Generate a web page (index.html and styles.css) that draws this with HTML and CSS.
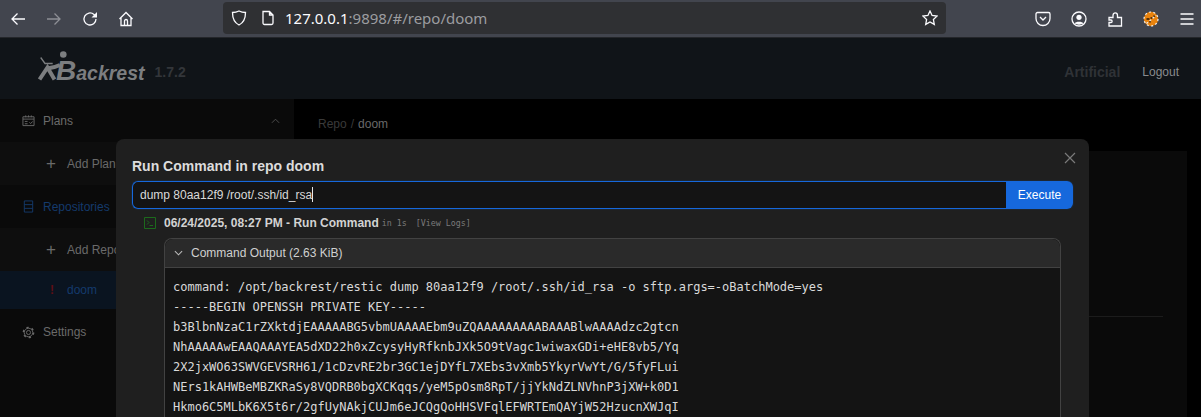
FILE: index.html
```html
<!DOCTYPE html>
<html lang="en">
<head>
<meta charset="utf-8">
<title>Backrest</title>
<link rel="stylesheet" href="styles.css">
</head>
<body>
<div class="toolbar">
  <div class="nav-icons">
    <svg class="tb" viewBox="0 0 16 16"><path d="M15 8H2M7.5 2.5 2 8l5.500 5.500"/></svg>
    <svg class="tb dim" viewBox="0 0 16 16"><path d="M1 8h13M8.500 2.500 14 8l-5.500 5.500"/></svg>
    <svg class="tb" viewBox="0 0 16 16"><path d="M14 8a6 6 0 1 1-2-4.500L14 5.500"/><path class="fill" d="M15 1v5.500H9.500z"/></svg>
    <svg class="tb" viewBox="0 0 16 16"><path d="M1.500 8 8 1.500 14.500 8M3 6.500V14.500h10V6.500M6.500 14.500V10a1.500 1.500 0 0 1 3 0v4.500"/></svg>
  </div>
  <div class="urlbar">
    <svg class="tb shield" viewBox="0 0 16 16"><path d="M8 1c2 1 4 1.500 6.500 1.500C14.500 9 12 13 8 15 4 13 1.500 9 1.500 2.500 4 2.500 6 2 8 1z"/></svg>
    <svg class="tb page" viewBox="0 0 16 16"><path d="M3 1.500h6.500L13 5v8a1.500 1.500 0 0 1-1.500 1.500h-7A1.500 1.500 0 0 1 3 13zM9.500 1.500V5H13"/></svg>
    <span class="url"><span class="host">127.0.0.1</span>:9898/#/repo/doom</span>
    <svg class="tb star" viewBox="0 0 16 16"><path d="M8 1l2.100 4.500 4.900.6-3.600 3.400.9 4.900L8 12l-4.300 2.400.9-4.900L1 6.100l4.900-.6z"/></svg>
  </div>
  <div class="tb-right">
    <svg class="tb" viewBox="0 0 16 16"><path d="M2.500 1.500h11A1.500 1.500 0 0 1 15 3v4.500a7 7 0 0 1-14 0V3a1.500 1.500 0 0 1 1.500-1.500zM5 6l3 3 3-3"/></svg>
    <svg class="tb" viewBox="0 0 16 16"><circle cx="8" cy="8" r="7"/><circle class="fill" cx="8" cy="6.300" r="2.600"/><path class="fill" d="M3.500 12.500c1-2.300 8-2.300 9 0-2.500 1.500-6.500 1.500-9 0z"/></svg>
    <svg class="tb" viewBox="0 0 16 16"><path d="M2 6.500h4V4.500C6 1 10.500 1 10.500 4.500V6.500H14.500V15H2V11.500H4C5.500 11.500 5.500 9 4 9H2z"/></svg>
    <svg class="tb ext" viewBox="0 0 16 16"><circle class="orange" cx="8" cy="8" r="7.200"/><circle class="ring" cx="8" cy="8" r="7"/><path class="spots" d="M3.500 7h3v2h-3zM7.500 6h2v2h-2zM10 4.500h2v1.500h-2zM6 10h2v1.500H6z"/><path class="slash" d="M3.500 12.500 13 4.500"/></svg>
    <svg class="tb" viewBox="0 0 16 16"><path d="M1.500 3h13M1.500 8h13M1.500 13h13"/></svg>
  </div>
</div>

<header class="app-header">
  <div class="logo">
    <svg class="logo-mark" viewBox="0 0 38 40"><circle class="logo-head" cx="25.300" cy="5.500" r="3.300"/><path class="logo-line" d="M2.700 8.500 7 14.500h7.700"/><path class="logo-body" d="M1.500 30.500 9.500 18.500l7 12M9 19.500c5-.5 9-1.500 13-3.500"/></svg>
    <span class="logo-b">B</span><span class="logo-text">ackrest</span>
    <span class="version">1.7.2</span>
  </div>
  <div class="instance">Artificial</div>
  <div class="logout">Logout</div>
</header>

<div class="app-body">
  <nav class="sidebar">
    <div class="side-row">
      <svg class="side-icon" viewBox="0 0 14 14"><path d="M1 3h12v9.500H1zM1 5.500h12M4 1.500v2M7 1.500v2M10 1.500v2M3 8h3M3 10.500h3M8 9l1.300 1.300L11.500 8"/></svg>
      <span>Plans</span>
      <svg class="chev" viewBox="0 0 10 6"><path d="M1 5l4-4 4 4"/></svg>
    </div>
    <div class="side-row sub">
      <span class="plus">+</span><span>Add Plan</span>
    </div>
    <div class="side-row active-group">
      <svg class="side-icon" viewBox="0 0 14 14"><path d="M2.500 1h9v12h-9zM2.500 5h9M2.500 9h9"/></svg>
      <span>Repositories</span>
    </div>
    <div class="side-row sub">
      <span class="plus">+</span><span>Add Repo</span>
    </div>
    <div class="side-row sub selected">
      <span class="bang">!</span><span>doom</span>
    </div>
    <div class="side-row settings">
      <svg class="side-icon" viewBox="0 0 14 14"><circle cx="7" cy="7" r="2.200"/><circle cx="7" cy="7" r="4.600"/><circle class="gear-teeth" cx="7" cy="7" r="5.500"/></svg>
      <span>Settings</span>
    </div>
  </nav>
  <main class="content">
    <div class="crumbs"><span class="crumb-dim">Repo</span><span class="crumb-dim">/</span><span class="crumb-cur">doom</span></div>
    <div class="panel"><div class="panel-rule"></div></div>
  </main>
</div>

<section class="modal">
  <svg class="close" viewBox="0 0 12 12"><path d="M1 1l10 10M11 1 1 11"/></svg>
  <h2 class="modal-title">Run Command in repo doom</h2>
  <div class="cmd-row">
    <div class="cmd-input">dump 80aa12f9 /root/.ssh/id_rsa<span class="caret"></span></div>
    <div class="cmd-btn">Execute</div>
  </div>
  <div class="op-row">
    <svg class="op-icon" viewBox="0 0 12 12"><path d="M.5.5h11v11H.5zM3 3.500 5 5.500 3 7.500M5.500 8.500h3.500"/></svg>
    <span class="op-title">06/24/2025, 08:27 PM - Run Command</span>
    <span class="op-meta">in 1s</span>
    <span class="op-meta">[View Logs]</span>
  </div>
  <div class="output">
    <div class="output-head">
      <svg class="output-chev" viewBox="0 0 10 6"><path d="M1 1l4 4 4-4"/></svg>
      <span>Command Output (2.63 KiB)</span>
    </div>
    <pre class="output-body">command: /opt/backrest/restic dump 80aa12f9 /root/.ssh/id_rsa -o sftp.args=-oBatchMode=yes
-----BEGIN OPENSSH PRIVATE KEY-----
b3BlbnNzaC1rZXktdjEAAAAABG5vbmUAAAAEbm9uZQAAAAAAAAABAAABlwAAAAdzc2gtcn
NhAAAAAwEAAQAAAYEA5dXD22h0xZcysyHyRfknbJXk5O9tVagc1wiwaxGDi+eHE8vb5/Yq
2X2jxWO63SWVGEVSRH61/1cDzvRE2br3GC1ejDYfL7XEbs3vXmb5YkyrVwYt/G/5fyFLui
NErs1kAHWBeMBZKRaSy8VQDRB0bgXCKqqs/yeM5pOsm8RpT/jjYkNdZLNVhnP3jXW+k0D1
Hkmo6C5MLbK6X5t6r/2gfUyNAkjCUJm6eJCQgQoHHSVFqlEFWRTEmQAYjW52HzucnXWJqI</pre>
  </div>
</section>
</body>
</html>
```

FILE: styles.css
```css
* { box-sizing: border-box; }
html, body { margin: 0; height: 417px; overflow: hidden; }
body { position: relative; background: #000; font-family: "Liberation Sans", Arial, sans-serif; font-size: 12px; }

.toolbar { height: 38px; background: #42454e; border-bottom: 1px solid #24262a; display: flex; align-items: center; }
.tb { width: 16px; height: 16px; flex: none; fill: none; stroke: #fbfbfe; stroke-width: 1.300; }
.tb .fill { fill: #fbfbfe; stroke: none; }
.tb.dim { stroke: #8d8f95; }
.nav-icons { display: flex; gap: 20px; padding-left: 10px; width: 223px; }
.urlbar { width: 723px; height: 32px; background: #2f3033; border-radius: 4px; display: flex; align-items: center; padding: 0 8px 0 0; margin-top: -1px; }
.shield { margin-left: 8px; }
.page { margin-left: 13px; }
.url { margin-left: 9px; flex: 1; font-family: "Noto Sans", sans-serif; font-size: 15px; color: #9c9da0; }
.host { color: #fbfbfe; }
.tb-right { display: flex; gap: 20px; margin-left: 89px; }
.tb .orange { fill: #e8830e; stroke: none; }
.tb .ring { stroke: #f2f2f2; stroke-width: 1.200; stroke-dasharray: 2 2.400; }
.tb .spots { fill: #5a3208; stroke: none; }
.tb .slash { stroke: #eee; stroke-dasharray: 2 2; }

.app-header { height: 61px; background: #101418; display: flex; align-items: center; padding: 6px 22px 0 0; }
.logo { display: flex; align-items: flex-end; flex: 1; padding-left: 38px; height: 34px; font-style: italic; font-weight: 700; color: #7c7e80; }
.logo-mark { width: 38px; height: 40px; flex: none; margin-right: -20px; }
.logo-head { fill: #7c7e80; }
.logo-line { fill: none; stroke: #7c7e80; stroke-width: 1.300; }
.logo-body { fill: none; stroke: #7c7e80; stroke-width: 4; }
.logo-b { font-size: 28px; line-height: 37px; }
.logo-text { font-size: 19.500px; line-height: 32px; }
.version { font-style: normal; font-size: 14px; color: #33363a; margin: 0 0 3px 10px; line-height: 28px; }
.instance { font-size: 14px; font-weight: 700; color: #2f3236; margin-right: 22px; }
.logout { color: #898b8e; font-size: 12px; }

.app-body { display: flex; height: 318px; }
.sidebar { width: 294px; background: #0a0a0a; color: #6a6a6a; }
.side-row { height: 43px; display: flex; align-items: center; padding-left: 22px; position: relative; }
.side-row.sub { padding-left: 46px; background: #0e0e0e; }
.side-row.selected { height: 38px; background: #0a1420; color: #143a6c; }
.side-row.settings { height: 46px; }
.active-group { color: #143a6c; }
.side-icon { width: 13px; height: 13px; fill: none; stroke: currentColor; stroke-width: 1; margin-right: 8px; }
.gear-teeth { stroke-width: 1.600; stroke-dasharray: 2.400 3.360; }
.plus { font-size: 17px; width: 21px; line-height: 17px; color: #6a6a6a; }
.bang { font-weight: 700; width: 21px; padding-left: 4px; color: #5e0f14; }
.chev { position: absolute; left: 271px; top: 19px; width: 9px; height: 6px; fill: none; stroke: #555; }

.content { flex: 1; padding: 18px 14px 0 24px; }
.crumbs { display: flex; gap: 4px; line-height: 15px; }
.crumb-dim { color: #3a3a3a; }
.crumb-cur { color: #696969; }
.panel { margin-top: 19px; height: 266px; background: #0a0a0a; padding: 165px 24px 0; }
.panel-rule { height: 1px; background: #1c1c1c; }

.modal { position: absolute; left: 116px; top: 139px; width: 973px; height: 278px; background: #1f1f1f; border-radius: 8px 8px 0 0; padding: 19px 16px 0; }
.close { position: absolute; left: 948px; top: 13px; width: 12px; height: 12px; fill: none; stroke: #7a7a7a; stroke-width: 1.200; }
.modal-title { margin: 0; font-size: 14px; line-height: 16px; font-weight: 700; color: #dcdcdc; }
.cmd-row { display: flex; height: 28px; margin-top: 7px; box-shadow: 0 0 0 1px rgba(22,104,220,.1); border-radius: 6px; }
.cmd-input { flex: 1; background: #141414; border: 1px solid #1668dc; border-right: 0; border-radius: 6px 0 0 6px; padding-left: 7px; line-height: 26px; color: #d9d9d9; }
.caret { display: inline-block; width: 1px; height: 15px; background: #e6e6e6; vertical-align: -3px; }
.cmd-btn { width: 67px; background: #1668dc; border-radius: 0 6px 6px 0; color: #fff; text-align: center; line-height: 28px; }
.op-row { display: flex; align-items: center; height: 14px; margin: 7px 0 0 12px; gap: 3px; }
.op-icon { width: 12px; height: 12px; fill: none; stroke: #1c6a1c; stroke-width: 1; margin-right: 5px; }
.op-title { font-weight: 700; color: #d2d2d2; }
.op-meta { font-family: "DejaVu Sans Mono", monospace; font-size: 8.300px; color: #7a7a7a; }
.op-meta + .op-meta { margin-left: 6px; }
.output { margin: 8px 12px 0 32px; border: 1px solid #424242; border-bottom: 0; border-radius: 8px 8px 0 0; height: 179px; overflow: hidden; background: #141414; }
.output-head { height: 29px; background: #2a2a2a; border-bottom: 1px solid #424242; border-radius: 8px 8px 0 0; display: flex; align-items: center; padding-left: 9px; gap: 8px; color: #d0d0d0; }
.output-chev { width: 9px; height: 6px; fill: none; stroke: #bbb; stroke-width: 1.200; }
.output-body { margin: 0; padding: 9px 8px 0; font-family: "DejaVu Sans Mono", monospace; font-size: 12px; line-height: 20px; color: #d9d9d9; }
```
